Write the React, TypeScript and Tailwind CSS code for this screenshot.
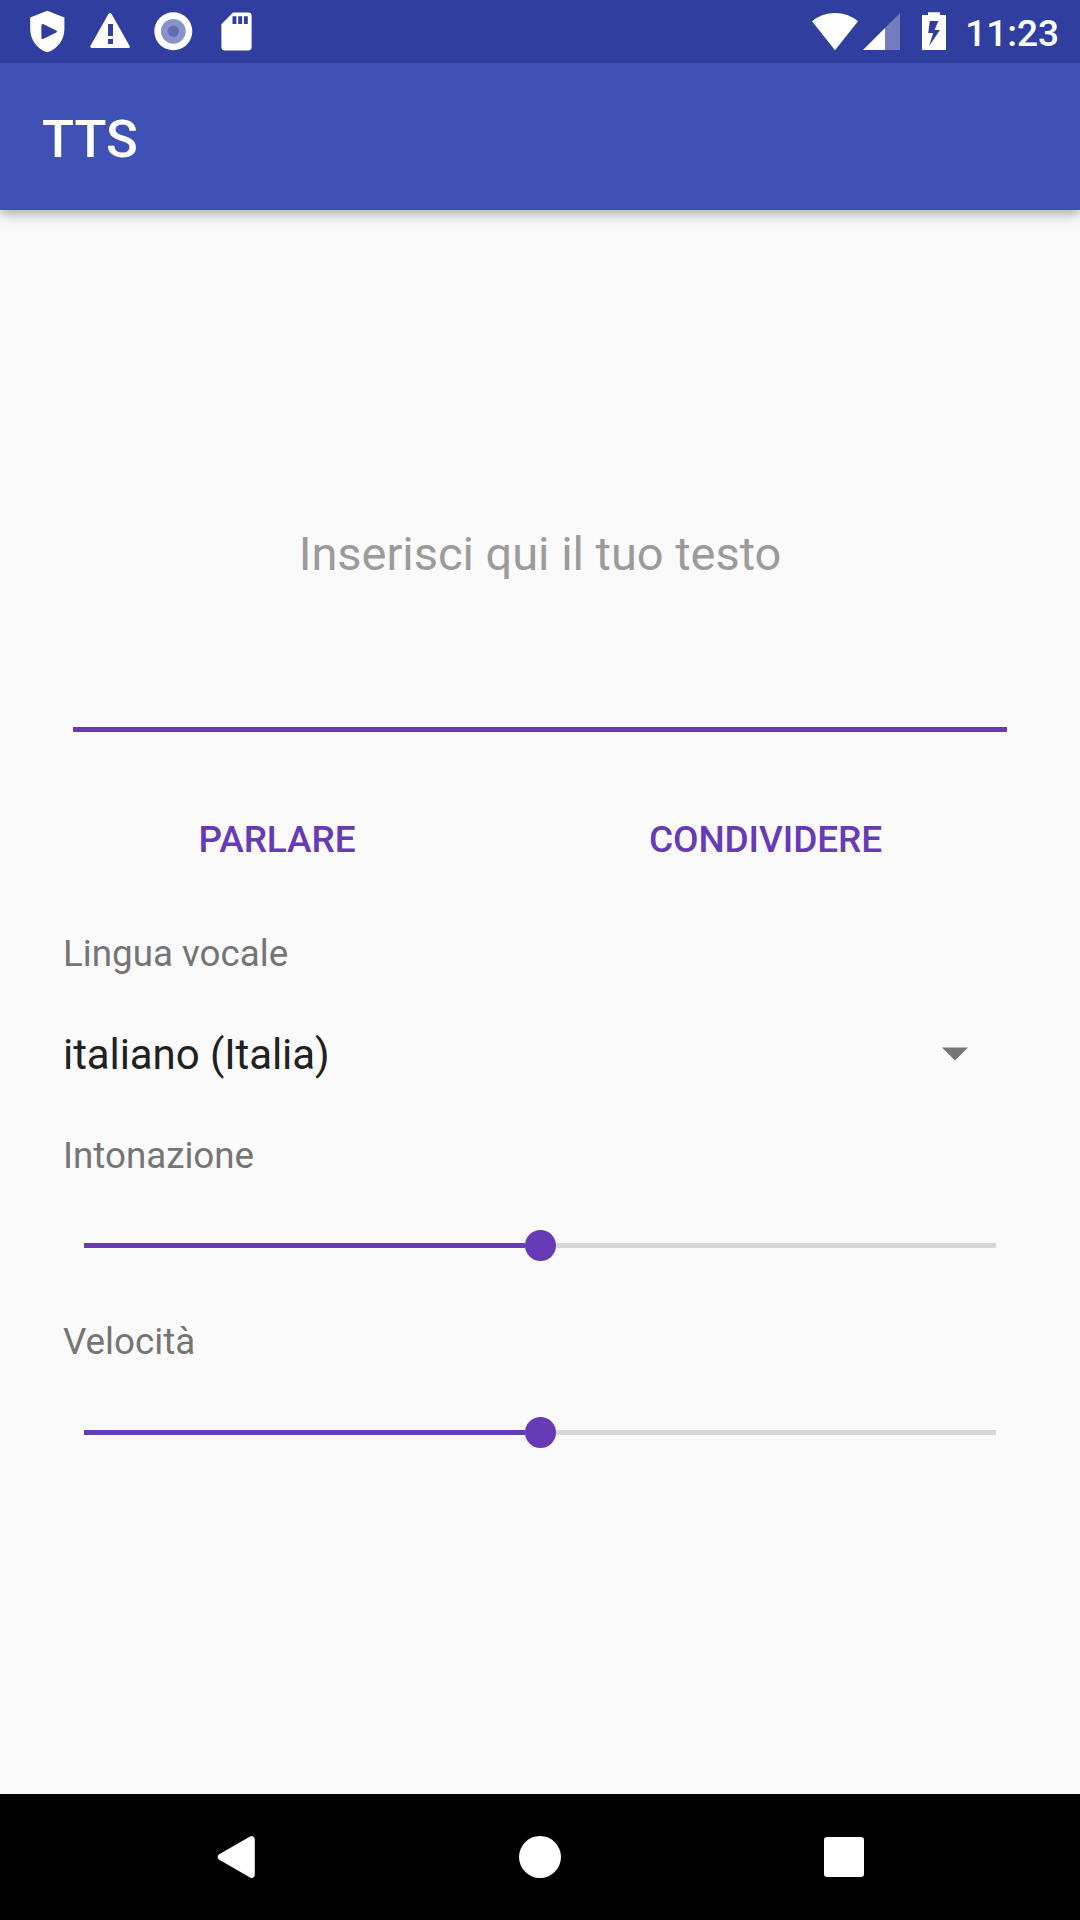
import React, { useState } from 'react';

function StatusBar() {
  return (
    <div className="flex h-[63px] items-start justify-between bg-[#303f9f] text-white">
      <div className="flex pl-[30px]">
        <svg className="mr-[24px] h-[63px] w-[36px]" viewBox="30 0 36 63">
          <path
            fill="#fff"
            fillRule="evenodd"
            d="M47.3 10.7 64.4 17.6V29C64.4 40 57 49.5 47.3 52.2 37.6 49.5 30.2 40 30.2 29V17.6ZM43.6 24.2Q41.4 23.2 41.4 25.5V37.5Q41.4 39.8 43.6 38.8L56.3 32.4Q58 31.5 56.3 30.6Z"
          />
        </svg>
        <svg className="mr-[24px] h-[63px] w-[40px]" viewBox="90 0 40 63">
          <path
            fill="#fff"
            fillRule="evenodd"
            d="M108.4 14.1Q110 11.7 111.6 14.1L129.6 45.9Q130.4 48 128.4 48H91.8Q89.6 48 90.4 45.9ZM108 24V36H113V24ZM108 39V44H113V39Z"
          />
        </svg>
        <svg className="mr-[26px] h-[63px] w-[40px]" viewBox="154 0 40 63">
          <circle cx="173.3" cy="31.3" r="19" fill="#fff" />
          <circle cx="173.3" cy="31.3" r="12.4" fill="#8a92ca" />
          <circle cx="173.3" cy="31.3" r="5.7" fill="#636db7" />
        </svg>
        <svg className="h-[63px] w-[34px]" viewBox="220 0 34 63">
          <path
            fill="#fff"
            fillRule="evenodd"
            d="M233 12.6H248.2Q251.6 12.6 251.6 16V47Q251.6 50.4 248.2 50.4H224.8Q221.4 50.4 221.4 47V24.2ZM232.5 16.3V24H236.4V16.3ZM238.2 16.3V24H242.1V16.3ZM243.9 16.3V24H247.8V16.3Z"
          />
        </svg>
      </div>
      <div className="flex pr-[21px]">
        <svg className="mr-[5px] h-[63px] w-[46px]" viewBox="812 0 46 63">
          <path fill="#fff" d="M835 50.2 812 21.2Q822 13 835 13T858 21.2Z" />
        </svg>
        <svg className="mr-[22px] h-[63px] w-[37px]" viewBox="863 0 37 63">
          <path fill="#fff" fillOpacity=".32" d="M885 28 900 13V50H885Z" />
          <path fill="#fff" d="M863 50 885 28V50Z" />
        </svg>
        <svg className="mr-[19px] h-[63px] w-[24px]" viewBox="922 0 24 63">
          <path
            fill="#fff"
            fillRule="evenodd"
            d="M928 15V12.3H940V15H946V50H922V15ZM929.8 21 928.2 33H933.2L929 46.2 940 30H934.6L938.4 21Z"
          />
        </svg>
        <span className="mt-[12px] text-[37px] leading-[43px] font-medium">11:23</span>
      </div>
    </div>
  );
}

function Slider({ label, className }: { label: string; className: string }) {
  const [value] = useState(50);
  return (
    <div className={`flex flex-col justify-between ${className}`}>
      <div className="text-[36.75px] leading-[43px] text-[#757575]">{label}</div>
      <div className="mx-[21px] flex h-[31px] items-center">
        <div className="h-[5px] bg-[#673ab7]" style={{ width: `calc(${value}% - 15px)` }} />
        <div className="size-[31px] shrink-0 rounded-full bg-[#673ab7]" />
        <div className="h-[5px] flex-1 bg-[#d6d6d6]" />
      </div>
    </div>
  );
}

export default function App() {
  return (
    <div className="flex h-[1920px] w-[1080px] flex-col overflow-hidden bg-[#fafafa] font-['Roboto',sans-serif]">
      <header className="shadow-[0_4px_12px_rgba(0,0,0,0.32)]">
        <StatusBar />
        <div className="h-[147px] bg-[#3f51b5] pt-[45px] pl-[42px] text-[52.5px] leading-[62px] font-medium text-white">
          TTS
        </div>
      </header>

      <main className="flex flex-1 flex-col px-[63px]">
        <div className="mx-[10px] flex h-[522px] flex-col justify-end border-b-[5px] border-[#673ab7] pb-[145px] text-center text-[47px] leading-[56px] tracking-[-0.03px] text-[#9b9b9b]">
          Inserisci qui il tuo testo
        </div>

        <div className="mt-[86px] flex justify-between text-[37px] leading-[43px] font-medium tracking-[-0.1px] text-[#673ab7]">
          <button className="w-[428px]">PARLARE</button>
          <button className="w-[503px]">CONDIVIDERE</button>
        </div>

        <div className="mt-[71px] text-[36.75px] leading-[43px] text-[#757575]">Lingua vocale</div>
        <div className="mt-[55px] flex h-[49px] items-center justify-between pr-[49.5px] text-[42px] leading-[49px] tracking-[-0.08px] text-[#212121]">
          <span>italiano (Italia)</span>
          <svg className="-mt-[2px] h-[14px] w-[26px]" viewBox="0 0 26 14">
            <path fill="#757575" d="M0 .5H26L13 13.5Z" />
          </svg>
        </div>

        <Slider label="Intonazione" className="mt-[55px] h-[127px]" />
        <Slider label="Velocità" className="mt-[59px] h-[128px]" />
      </main>

      <nav className="flex h-[126px] items-center bg-black pl-[217px]">
        <svg className="h-[42px] w-[38px]" viewBox="0 0 38 42">
          <path
            fill="#fff"
            d="M32.6 .8Q35-.8 37 1.2 37.8 2 37.8 4V38Q37.8 40 37 41 35 42.8 32.6 41.2L1.8 23.4Q-.6 21 1.8 18.6Z"
          />
        </svg>
        <div className="ml-[264px] size-[42px] rounded-full bg-white" />
        <div className="ml-[263px] size-[40px] rounded-[3px] bg-white" />
      </nav>
    </div>
  );
}
